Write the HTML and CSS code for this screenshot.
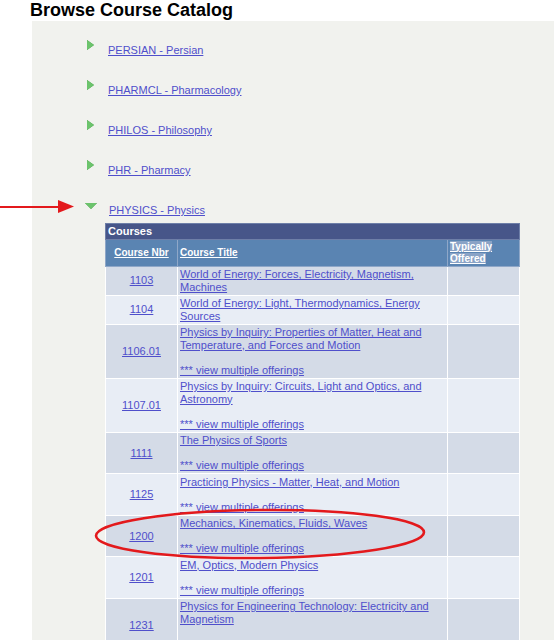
FILE: index.html
```html
<!DOCTYPE html>
<html>
<head>
    <meta charset="utf-8">
    <title>Browse Course Catalog</title>
    <link rel="stylesheet" href="styles.css">
</head>
<body>

<!-- Tiêu đề -->
<h1 class="page-title">Browse Course Catalog</h1>

<!-- Danh sách môn -->
<div class="catalog">
    <div class="subject">
        <span class="tri tri-right"></span>
        <a href="#" class="subject-link">PERSIAN - Persian</a>
    </div>
    <div class="subject">
        <span class="tri tri-right"></span>
        <a href="#" class="subject-link">PHARMCL - Pharmacology</a>
    </div>
    <div class="subject">
        <span class="tri tri-right"></span>
        <a href="#" class="subject-link">PHILOS - Philosophy</a>
    </div>
    <div class="subject">
        <span class="tri tri-right"></span>
        <a href="#" class="subject-link">PHR - Pharmacy</a>
    </div>
    <div class="subject open">
        <span class="tri tri-down"></span>
        <a href="#" class="subject-link">PHYSICS - Physics</a>
    </div>

    <!-- Bảng khóa học -->
    <table class="courses">
        <tr>
            <th class="grid-title" colspan="3">Courses</th>
        </tr>
        <tr class="col-head">
            <th class="c-nbr"><a href="#">Course Nbr</a></th>
            <th class="c-title"><a href="#">Course Title</a></th>
            <th class="c-off"><a href="#" class="hl">Typically<br>Offered</a></th>
        </tr>
        <tr class="odd">
            <td class="c-nbr"><a href="#">1103</a></td>
            <td class="c-title"><a href="#">World of Energy: Forces, Electricity, Magnetism, Machines</a></td>
            <td></td>
        </tr>
        <tr class="even">
            <td class="c-nbr"><a href="#">1104</a></td>
            <td class="c-title"><a href="#">World of Energy: Light, Thermodynamics, Energy Sources</a></td>
            <td></td>
        </tr>
        <tr class="odd">
            <td class="c-nbr"><a href="#">1106.01</a></td>
            <td class="c-title"><a href="#">Physics by Inquiry: Properties of Matter, Heat and Temperature, and Forces and Motion</a><br><br><a href="#">*** view multiple offerings</a></td>
            <td></td>
        </tr>
        <tr class="even">
            <td class="c-nbr"><a href="#">1107.01</a></td>
            <td class="c-title"><a href="#">Physics by Inquiry: Circuits, Light and Optics, and Astronomy</a><br><br><a href="#">*** view multiple offerings</a></td>
            <td></td>
        </tr>
        <tr class="odd">
            <td class="c-nbr"><a href="#">1111</a></td>
            <td class="c-title"><a href="#">The Physics of Sports</a><br><br><a href="#">*** view multiple offerings</a></td>
            <td></td>
        </tr>
        <tr class="even">
            <td class="c-nbr"><a href="#">1125</a></td>
            <td class="c-title"><a href="#">Practicing Physics - Matter, Heat, and Motion</a><br><br><a href="#">*** view multiple offerings</a></td>
            <td></td>
        </tr>
        <tr class="odd">
            <td class="c-nbr"><a href="#">1200</a></td>
            <td class="c-title"><a href="#">Mechanics, Kinematics, Fluids, Waves</a><br><br><a href="#">*** view multiple offerings</a></td>
            <td></td>
        </tr>
        <tr class="even">
            <td class="c-nbr"><a href="#">1201</a></td>
            <td class="c-title"><a href="#">EM, Optics, Modern Physics</a><br><br><a href="#">*** view multiple offerings</a></td>
            <td></td>
        </tr>
        <tr class="odd">
            <td class="c-nbr"><a href="#">1231</a></td>
            <td class="c-title"><a href="#">Physics for Engineering Technology: Electricity and Magnetism</a><br><br><a href="#">*** view multiple offerings</a></td>
            <td></td>
        </tr>
    </table>
</div>

<!-- Chú thích đỏ (mũi tên + vòng tròn) -->
<svg class="marks" width="554" height="640" viewBox="0 0 554 640">
    <line x1="0" y1="207" x2="62" y2="207" stroke="#e3191c" stroke-width="2.2"/>
    <polygon points="58,200 74,206.5 58,213" fill="#e3191c"/>
    <ellipse cx="260" cy="534" rx="164" ry="24" fill="none" stroke="#e3191c" stroke-width="2.6" transform="rotate(-0.6 260 534)"/>
</svg>

</body>
</html>
```

FILE: styles.css
```css
        /* Tổng quan */
        html, body {
            height: 100%;
            margin: 0;
            overflow: hidden;
            font-family: "Liberation Sans", Arial, Helvetica, sans-serif;
            background-color: #ffffff;
            color: #000000;
        }

        body {
            position: relative;
        }

        .page-title {
            margin: 0;
            padding: 0 0 0 30px;
            height: 21px;
            font-size: 18px;
            line-height: 21px;
            font-weight: bold;
        }

        /* Khung xám */
        .catalog {
            margin-left: 32px;
            padding-top: 15px;
            background-color: #f1f2ee;
            min-height: 700px;
        }

        .subject {
            display: flex;
            align-items: flex-start;
            height: 40px;
            padding-left: 55px;
        }

        .subject.open {
            height: 27px;
        }

        .subject-link {
            margin-left: 14px;
            margin-top: 8px;
            font-size: 11px;
            line-height: 12px;
            color: #4f4fcb;
        }

        /* Tam giác */
        .tri {
            display: block;
            width: 0;
            height: 0;
        }

        .tri-right {
            margin-top: 4px;
            border-top: 5px solid transparent;
            border-bottom: 5px solid transparent;
            border-left: 7px solid #6cc46c;
            filter: drop-shadow(0 0 0.6px #3d8a3d);
        }

        .tri-down {
            margin-top: 7px;
            margin-left: -2px;
            border-left: 6px solid transparent;
            border-right: 6px solid transparent;
            border-top: 6px solid #6cc46c;
            filter: drop-shadow(0 0 0.6px #3d8a3d);
        }

        .subject.open .subject-link {
            margin-left: 12px;
        }

        /* Bảng */
        .courses {
            margin-left: 73px;
            width: 415px;
            border-collapse: collapse;
            border: 1px solid #6e7fa8;
            font-size: 11px;
            line-height: 12.5px;
        }

        .courses th, .courses td {
            border: 1px solid #ffffff;
            padding: 1.5px 2px 1.5px 2px;
            vertical-align: top;
        }

        .courses a {
            color: #4f4fcb;
        }

        .grid-title {
            background-color: #475689;
            color: #ffffff;
            text-align: left;
            height: 11px;
            padding: 1px 2px !important;
            border-color: #6e7fa8 !important;
        }

        .col-head th {
            background-color: #5a84b2;
            text-align: left;
            border-color: #8fa7c8;
            font-size: 10px;
            line-height: 12px;
            padding: 1px 2px 1px 2px;
        }

        .col-head th a {
            color: #ffffff;
        }

        .col-head .c-nbr, .col-head .c-title {
            vertical-align: middle;
        }

        .col-head .c-nbr {
            text-align: center;
        }

        .col-head a.hl {
            background-color: #8aa3c6;
        }

        td.c-nbr {
            width: 67px;
            text-align: center;
            vertical-align: middle;
        }

        th.c-off {
            width: 67px;
        }

        tr.odd td {
            background-color: #d4dbe7;
        }

        tr.even td {
            background-color: #e8edf5;
        }

        /* Chú thích */
        .marks {
            position: absolute;
            top: 0;
            left: 0;
            pointer-events: none;
        }
```
